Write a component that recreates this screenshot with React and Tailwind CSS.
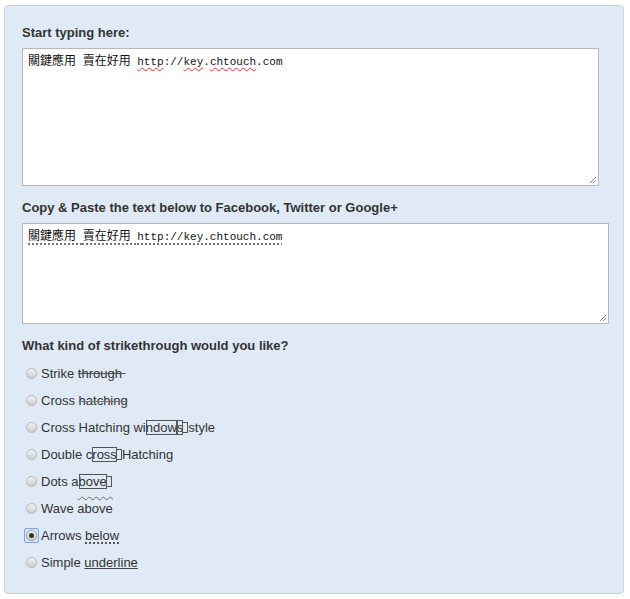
import React from "react";

const sans = { fontFamily: '"Liberation Sans", Arial, sans-serif' };

function Grip() {
  return (
    <svg className="absolute right-[1px] bottom-[1px]" width="9" height="9" viewBox="0 0 9 9">
      <path d="M8 2 L2 8 M8 5 L5 8" stroke="#8a8a8a" strokeWidth="1" fill="none" />
    </svg>
  );
}

function Radio({ checked }) {
  if (checked) {
    return (
      <span className="w-[15px] h-[15px] ml-[2px] mr-[2px] flex items-center justify-center border border-[#7aa7e0] rounded-[2px] bg-[#d6e4f5]">
        <span className="w-[11px] h-[11px] rounded-full border border-[#9a9a9a] bg-gradient-to-b from-[#f2f2f2] to-[#cfcfcf] flex items-center justify-center">
          <span className="w-[5px] h-[5px] rounded-full bg-[#333]" />
        </span>
      </span>
    );
  }
  return (
    <span className="w-[11px] h-[11px] ml-[4px] mr-[4px] rounded-full border border-[#b5b5b5] bg-gradient-to-b from-[#f4f4f4] to-[#cdcdcd]" />
  );
}

function Box({ children }) {
  return <span className="outline outline-1 outline-[#555] -outline-offset-1">{children}</span>;
}

function Tofu() {
  return <span className="inline-block w-[6px] h-[11px] border border-[#555] align-[-1px] -ml-[1px]" />;
}

const wavy = "underline decoration-wavy decoration-[#e03030] decoration-1 underline-offset-2";

export default function App() {
  const options = [
    <>Strike <span className="line-through decoration-[#555]">through&nbsp;</span></>,
    <>Cross <span className="line-through decoration-[#777] decoration-1">hatching</span></>,
    <>Cross Hatching wi<Box>ndow</Box><Box>s</Box><Tofu />style</>,
    <>Double c<Box>ross</Box><Tofu />Hatching</>,
    <>Dots a<Box>bove</Box><Tofu /></>,
    <>Wave <span className="overline decoration-wavy decoration-[#666] decoration-1">above</span></>,
    <>Arrows <span className="underline decoration-dotted decoration-[#555] decoration-2 underline-offset-[3px]">below</span></>,
    <>Simple <span className="underline decoration-[#444]">underline</span></>,
  ];
  return (
    <div className="w-[630px] h-[599px] bg-white pt-[5px] pl-[4px]" style={sans}>
      <div className="w-[620px] h-[589px] bg-[#dfeaf6] border border-[#c9d1da] rounded-[4px] pl-[17px] pt-[17px] text-[#333]">
        <div className="h-[20px] leading-[20px] mb-[5px] text-[13px] font-bold">Start typing here:</div>
        <div className="relative w-[577px] h-[138px] bg-white border border-[#b8b8b8] px-[5px] pt-[3px]">
          <div className="text-[11px] leading-[16px] text-[#111] whitespace-pre" style={{ fontFamily: '"Liberation Mono", "Noto Sans CJK TC", monospace' }}>
            <span className="text-[12px]" style={{ fontFamily: '"Noto Sans CJK TC", sans-serif' }}>關鍵應用</span>{" "}
            <span className="text-[12px]" style={{ fontFamily: '"Noto Sans CJK TC", sans-serif' }}>賣在好用</span>{" "}
            <span className={wavy}>http</span>://<span className={wavy}>key</span>.<span className={wavy}>chtouch</span>.com
          </div>
          <Grip />
        </div>
        <div className="h-[20px] leading-[20px] mt-[12px] mb-[5px] text-[13px] font-bold">Copy &amp; Paste the text below to Facebook, Twitter or Google+</div>
        <div className="relative w-[587px] h-[101px] bg-white border border-[#b8b8b8] px-[5px] pt-[3px]">
          <div className="text-[11px] leading-[16px] text-[#111] whitespace-pre underline decoration-dotted decoration-[#777] decoration-2 underline-offset-[3px]" style={{ fontFamily: '"Liberation Mono", "Noto Sans CJK TC", monospace' }}>
            <span className="text-[12px]" style={{ fontFamily: '"Noto Sans CJK TC", sans-serif' }}>關鍵應用</span>{" "}
            <span className="text-[12px]" style={{ fontFamily: '"Noto Sans CJK TC", sans-serif' }}>賣在好用</span>{" "}
            http://key.chtouch.com
          </div>
          <Grip />
        </div>
        <div className="h-[20px] leading-[20px] mt-[12px] mb-[4px] text-[13px] font-bold">What kind of strikethrough would you like?</div>
        <div className="flex flex-col">
          {options.map((o, i) => (
            <div key={i} className="h-[27px] flex items-center text-[13px] text-[#333]">
              <Radio checked={i === 6} />
              <span>{o}</span>
            </div>
          ))}
        </div>
      </div>
    </div>
  );
}
